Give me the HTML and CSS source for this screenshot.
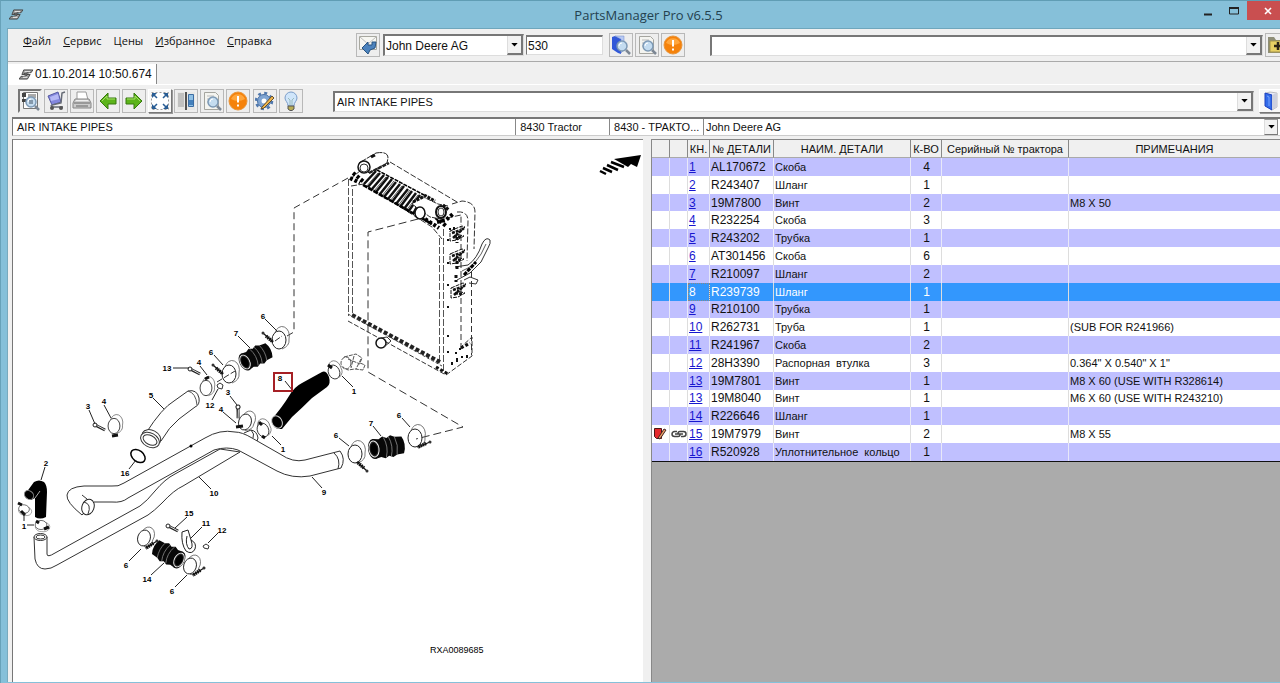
FILE: index.html
```html
<!DOCTYPE html>
<html lang="ru">
<head>
<meta charset="utf-8">
<title>PartsManager Pro v6.5.5</title>
<link rel="stylesheet" href="styles.css">
</head>
<body>
<svg class="defs" width="0" height="0" aria-hidden="true">
  <defs>
    <symbol id="logo" viewBox="0 0 16 12"><path d="M5 1h10l-2 3H9L8 6h4l-3 5H0l2-3h4l1-2H3z" fill="#999" stroke="#444"/><path d="M6 3h6M4 9h5" stroke="#fff"/><path d="M5 5l5-1M7 8l3-3" stroke="#444"/></symbol>
    <symbol id="arrow" viewBox="0 0 8 5"><path d="M0 0h8L4 4.500z"/></symbol>
    <symbol id="lens" viewBox="0 0 20 20"><circle cx="11" cy="11" r="5" fill="#c4dcf0" stroke="#7d99b5" stroke-width="1.500"/><path d="M8 11a3 3 0 0 1 3-3" stroke="#fff" fill="none"/><path d="M15 15l4 4" stroke="#7c8794" stroke-width="2.500"/></symbol>
    <symbol id="warn" viewBox="0 0 20 20"><circle cx="10" cy="10" r="9" fill="#f5820b" stroke="#e8963c"/><path d="M3 8a7.500 7.500 0 0 1 14 0q-7 4-14 0" fill="#ffa63d"/><path d="M10 5v6.500M10 13.500v2" stroke="#fff" stroke-width="2"/></symbol>
    <symbol id="pagefind" viewBox="0 0 20 20"><path d="M2.500 1.500h11l3 3v14h-14z" fill="#f4f4f0" stroke="#a5a59f"/><path d="M5 5h7M5 8h4M5 11h3" stroke="#bbb"/><use href="#lens"/></symbol>
    <symbol id="bookfind" viewBox="0 0 20 20"><path d="M1 2l3-1 6 3v15l-3-1-6-4z" fill="#3158d8"/><path d="M4 1h9v14l-3 3V4z" fill="#b8caf4" stroke="#6d86c8" stroke-width=".500"/><use href="#lens"/></symbol>
    <symbol id="left" viewBox="0 0 20 20"><path d="M2 10l8-8v5h8v6h-8v5z" fill="#5cb41a" stroke="#36780e" stroke-linejoin="round"/><path d="M4 10l5-5v3h8" fill="none" stroke="#a6df68"/></symbol>
  </defs>
</svg>
<div class="window">
  <header class="titlebar">
    <svg class="app-icon"><use href="#logo"/></svg>
    <h1>PartsManager Pro v6.5.5</h1>
    <div class="win-buttons">
      <button class="win" aria-label="Свернуть"><svg width="10" height="10"><path d="M1 8.500h8" stroke="#222" stroke-width="2"/></svg></button>
      <button class="win" aria-label="Развернуть"><svg width="10" height="10"><path d="M.5 2h9v6h-9z" fill="none" stroke="#222"/><path d="M0 2h10" stroke="#222" stroke-width="2"/></svg></button>
      <button class="win close" aria-label="Закрыть"><svg width="8" height="8"><path d="M1 1l6 6M7 1L1 7" stroke="#fff" stroke-width="1.600"/></svg></button>
    </div>
  </header>
  <div class="frame">
    <div class="menubar">
      <nav class="menu">
        <button><u>Ф</u>айл</button><button><u>С</u>ервис</button><button>Цены</button><button><u>И</u>збранное</button><button><u>С</u>правка</button>
      </nav>
      <button class="tool" aria-label="Назад к поиску"><svg viewBox="0 0 20 20"><path d="M1.500 1.500h17v13h-17z" fill="#f7f7f2" stroke="#a8a8a0"/><path d="M2 2l8 7 8-7" fill="none" stroke="#bbb"/><path d="M4 13l6-6v3h4V7h4l-1 6-5 2-2 4z" fill="#4d83bd" stroke="#285482"/></svg></button>
      <label class="combo brand"><select aria-label="Каталог"><option>John Deere AG</option></select><span class="drop"><svg><use href="#arrow"/></svg></span></label>
      <input class="query" type="text" value="530" aria-label="Поиск">
      <div class="tools find">
        <button class="tool" aria-label="Поиск в каталоге"><svg><use href="#bookfind"/></svg></button>
        <button class="tool" aria-label="Поиск детали"><svg><use href="#pagefind"/></svg></button>
        <button class="tool" aria-label="Внимание"><svg><use href="#warn"/></svg></button>
      </div>
      <label class="combo favourite"><select aria-label="Избранное"><option></option></select><span class="drop"><svg><use href="#arrow"/></svg></span></label>
      <button class="tool bleed" aria-label="Добавить в избранное"><svg viewBox="0 0 20 20"><path d="M1 2h6l2 3h11v13H1z" fill="#8e8e78"/><path d="M3 6h17v11H3z" fill="#e7d064" stroke="#a3934b"/><path d="M11 7v8M7 11h8" stroke="#2c2417" stroke-width="2.500"/></svg></button>
    </div>
    <div class="tabs"><button class="tab"><svg class="app-icon"><use href="#logo"/></svg>01.10.2014 10:50.674</button></div>
    <div class="toolbar">
      <div class="tools">
        <button class="tool pressed" aria-label="Список деталей"><svg viewBox="0 0 20 20"><path d="M3.500 1.500h14v16h-14z" fill="#fff" stroke="#777"/><path d="M2 2h4v4H2zM2 8h4v3H2z" fill="#444"/><path d="M8 4h8M8 6h8" stroke="#555"/><use href="#lens"/><path d="M9 10h4M9 12h4" stroke="#456"/></svg></button>
        <button class="tool" aria-label="Корзина"><svg viewBox="0 0 20 20"><path d="M2 5l10-4 3 10-9 3z" fill="#8387dd" stroke="#5559a2"/><path d="M4 6l8-3 1 5-8 2z" fill="#b5b8f5"/><path d="M19 1l-3 1-1 10-9 2M5 14l1 2h11" fill="none" stroke="#666b75" stroke-width="1.500"/><circle cx="6" cy="17" r="2" fill="#555"/><circle cx="15" cy="17" r="2" fill="#555"/></svg></button>
        <button class="tool" aria-label="Печать"><svg viewBox="0 0 20 20"><path d="M5 9V1h9l2 8" fill="#fff" stroke="#999"/><path d="M3 8h14l2 4v5H1v-5z" fill="#ccc" stroke="#858585"/><path d="M2 12h16M4 15h12" stroke="#666"/><path d="M4 9.500h12" stroke="#eee"/></svg></button>
        <button class="tool" aria-label="Предыдущая"><svg><use href="#left"/></svg></button>
        <button class="tool" aria-label="Следующая"><svg class="flip"><use href="#left"/></svg></button>
        <button class="tool raised" aria-label="Во весь экран"><svg viewBox="0 0 20 20"><path d="M1.500 1.500h17v17h-17z" fill="#fff" stroke="#999" stroke-dasharray="2 2"/><path d="M2 2h5L2 7zM18 2h-5l5 5zM2 18v-5l5 5zM18 18v-5l-5 5z" fill="#295d94"/><path d="M4 4l3 3M16 4l-3 3M4 16l3-3M16 16l-3-3" stroke="#295d94" stroke-width="1.500"/></svg></button>
        <button class="tool" aria-label="Разделить"><svg viewBox="0 0 20 20"><path d="M1 1h18v18H1z" fill="#e8e8e6"/><path d="M2 3h6M2 5h6M2 7h6M2 9h6M2 11h6M2 13h6M2 15h6" stroke="#999"/><path d="M10 1v18" stroke="#222" stroke-width="1.500"/><path d="M12.500 3.500h5v12h-5z" fill="#8fc0e5" stroke="#3c6da3"/><path d="M13 9h4v5h-4z" fill="#4581bc"/></svg></button>
        <button class="tool" aria-label="Просмотр"><svg><use href="#pagefind"/></svg></button>
        <button class="tool" aria-label="Внимание"><svg><use href="#warn"/></svg></button>
      </div>
      <div class="tools extra">
        <button class="tool" aria-label="Настройки"><svg viewBox="0 0 20 20"><circle cx="9" cy="10" r="6.500" fill="#7fa5d3" stroke="#466fa5" /><circle cx="9" cy="10" r="8" fill="none" stroke="#5078ad" stroke-width="2.500" stroke-dasharray="3 3.280"/><circle cx="9" cy="10" r="2.500" fill="#fff"/><path d="M7 16L17 5l2 2L9 17l-3 1z" fill="#f0b64c" stroke="#64502e"/></svg></button>
        <button class="tool" aria-label="Подсказка"><svg viewBox="0 0 20 20"><path d="M10 1a6 6 0 0 0-6 6c0 3 3 4 3 8h6c0-4 3-5 3-8a6 6 0 0 0-6-6z" fill="#cfe5fa" stroke="#7b9dca"/><path d="M9 14V9L7 7M11 14V9l2-2" fill="none" stroke="#9bb"/><path d="M7 15h6v3l-2 1.500H9L7 18z" fill="#b9ad55" stroke="#555"/></svg></button>
      </div>
      <label class="combo section"><select aria-label="Раздел"><option>AIR INTAKE PIPES</option></select><span class="drop"><svg><use href="#arrow"/></svg></span></label>
      <button class="tool raised book" aria-label="Каталог"><svg viewBox="0 0 20 20"><path d="M5 2l4-1 7 1v14l-5 3-6-4z" fill="#e5e8f5" stroke="#888" stroke-width=".500"/><path d="M4 2l7 2v15l-7-4z" fill="#326bea" stroke="#1c41bd"/><path d="M11 4l5-2v14l-5 3" fill="#cdd0dd"/><path d="M6 5l2 1v9" stroke="#78a5fa" fill="none"/></svg></button>
    </div>
    <div class="path">
      <span>AIR INTAKE PIPES</span><span>8430 Tractor</span><span>8430 - ТРАКТО...</span>
      <label class="combo catalog"><select aria-label="Производитель"><option>John Deere AG</option></select><span class="drop"><svg><use href="#arrow"/></svg></span></label>
    </div>
    <main class="content">
      <section class="drawing" aria-label="AIR INTAKE PIPES">
        <svg class="scheme" viewBox="13 141 630 541" preserveAspectRatio="xMinYMin meet" role="img" aria-label="RXA0089685">
          <defs>
            <g id="clamp"><ellipse rx="7" ry="9" fill="none" stroke="#222"/><path d="M-4-7A7 9 0 0 1 10-1Q11 6 3 9" fill="none" stroke="#555" stroke-width=".800"/></g>
            <g id="screw"><path d="M0 0l10 9" stroke="#111" stroke-width="1.200"/><path d="M3 3l7 6" stroke="#111" stroke-width="3.500" stroke-dasharray="1.500 .700"/><circle r="1.500" fill="#333"/></g>
            <g id="bolt"><path d="M0 0l10 5" stroke="#222" stroke-width="3"/><path d="M1 0l9 5" stroke="#ddd"/><circle r="2" fill="#fff" stroke="#222"/></g>
            <g id="bellows"><path d="M0-10L6-9 10-11 14-9 18-11 22-9 29-8Q33 0 29 9L22 9 18 11 14 9 10 11 6 9 0 10z" fill="#080808"/><path d="M11-10Q15 0 11 10M16-10Q20 0 16 10M22-9Q25 0 22 9" fill="none" stroke="#888" stroke-width=".800"/><ellipse rx="6" ry="10" fill="#111"/><ellipse rx="5" ry="8" fill="#222" stroke="#eee"/><ellipse rx="3.500" ry="6" fill="#000"/></g>
            <g id="bracket"><path d="M-7-3L5-8 8-7 3-2-1 0 7 2 0 6-7 7z" fill="none" stroke="#111" stroke-dasharray="4 1"/><path d="M-4 4L7-6M-5-1L4-4M-3 2l7 1" stroke="#111" stroke-width="2.500" stroke-dasharray="3 1"/></g>
          </defs>

          <!-- direction arrow -->
          <path d="M614 160L641 156 637 168 631 165 628 168z"/>
          <path d="M611 163l13 5M607 166l11 5M603 169l9 4M600 172l6 3" stroke="#000" stroke-width="2.500"/>

          <!-- radiator -->
          <g fill="none" stroke="#333">
            <path d="M348 179L294 209V333L287 337" stroke-dasharray="7 4"/>
            <path d="M418 220L368 233V373L463 428 416 440" stroke-dasharray="8 4"/>
            <path d="M348.500 180V317M352.500 190V314M439.500 239V365M443.500 230V372" stroke="#555" stroke-dasharray="7 2"/>
            <path d="M461 227V350M471.500 273V356" stroke-dasharray="6 3"/>
            <path d="M348 322L446 376 472 357V338L461 348" stroke-dasharray="5 2"/>
            <path d="M350 180L360 172M351 187L364 185 432 228 442 240M390 163L457 203" stroke-dasharray="6 2"/>
            <path d="M452 205L462 202Q475 203 475 213L474 250M457 213Q468 212 468 222L467 262M447 219L461 216V226" stroke-dasharray="6 2"/>
            <path d="M455 268L468 266Q477 260 482 245 486 237 490 241 491 244 488 249L481 263 470 274 457 281" />
            <path d="M462 272Q477 267 486 245" stroke-width=".800"/>
            <path d="M464 276l12-13" stroke="#000" stroke-width="3" stroke-dasharray="4 1"/>
            <path d="M464 281l6-3 8 3-2 4-7-1" />
            <path d="M376 172L364 185M380 174L368 188M384 176L372 190M388 178L376 193M392 180L380 195M396 183L384 198M400 185L388 200M404 187L392 203M408 190L396 205M412 192L400 208M416 194L404 210M420 196L408 213M420 202L413 215" stroke="#111" stroke-width="2.500"/>
            <path d="M378 174L366 188M386 178L374 192M394 182L382 197M402 187L390 202M410 191L398 207M418 196L406 212" stroke="#555" stroke-width="1"/>
            <path d="M363 186L432 225" stroke="#000" stroke-width="2.500" stroke-dasharray="5 1"/>
            <path d="M377 171L424 196" stroke="#000" stroke-width="1.500" stroke-dasharray="4 1"/>
            <path d="M350 179L360 184M353 174l11 9M432 215l14 12M437 223l9-2 8-7M425 220l14 9" stroke="#000" stroke-width="4" stroke-dasharray="3 2"/>
            <path d="M352 316L440 363" stroke="#222" stroke-width="4" stroke-dasharray="4 2"/>
            <path d="M348 315L442 367" stroke="#444" stroke-dasharray="3 2"/>
            <path d="M436 368l12 7M461 349l9-5M457 238v6M457 262v9M456 276v7" stroke="#111" stroke-width="3" stroke-dasharray="3 2"/>
            <path d="M359 164L376 154Q388 152 388 159L387 164 369 174z" fill="#fff" stroke="#222" stroke-dasharray="8 1"/>
            <path d="M369 174l20-10" stroke="#222" stroke-width="2.500" stroke-dasharray="4 1"/>
            <ellipse cx="364" cy="168" rx="6" ry="6" fill="#fff" stroke="#111" stroke-width="1.500"/><ellipse cx="364" cy="169" rx="4" ry="4"/>
            <path d="M371 158l4-2" stroke="#111" stroke-width="3"/>
            <path d="M412 205L421 197 438 205 448 207 441 220 430 218z" fill="#fff" stroke-dasharray="5 1"/>
            <path d="M413 203l10-5M424 196l11 6M443 206l6 5" stroke="#111" stroke-width="3" stroke-dasharray="3 1"/>
            <ellipse cx="420" cy="214" rx="5" ry="6" fill="#fff" stroke="#111" stroke-width="1.500"/>
            <ellipse cx="441" cy="213" rx="5" ry="6" fill="#fff" stroke="#111" stroke-width="2"/><ellipse cx="441" cy="213" rx="3" ry="4"/>
            <circle cx="381" cy="344" r="5" fill="#fff" stroke="#111" stroke-width="1.500"/><path d="M381 339l6-1 4 4-7 6"/>
          </g>
          <use href="#bracket" x="457" y="235"/><use href="#bracket" x="457" y="258"/><use href="#bracket" x="458" y="292"/>
          <path d="M448 240v2M448 263v2M448 285v2M448 307v2M448 336v2M448 352v2M452 363v3M457 359v4M456 353v2M462 357v2M467 356v3M460 349v2M454 228v3M450 229v2" stroke="#111" stroke-width="2"/>

          <!-- pipe 10 -->
          <g fill="#fff" stroke="#333">
            <path d="M34 538L35 560Q37 570 45 570 51 570 57 566L148 516Q154 512 162 504 174 491 183 487L240 453 220 450 175 475Q165 480 155 492 147 502 140 507L55 554Q47 559 47 555V538z"/>
            <ellipse cx="40.500" cy="538" rx="6.500" ry="3.500"/><ellipse cx="40.500" cy="538" rx="4.500" ry="2"/>
          </g>
          <!-- pipe 9 -->
          <path d="M82 516Q66 503 67 496 68 488 84 487H112Q118 488 124 484L205 439Q220 430 235 433 242 433 252 439L280 455Q293 464 305 461L340 452Q346 460 341 469L310 477Q292 480 277 472L238 451Q227 447 214 451L128 499Q122 504 112 503H94z" fill="#fff" stroke="#333"/>
          <path d="M82 496l5 4M334 454Q341 460 338 470" fill="none" stroke="#333"/><circle cx="191" cy="447" r="1.500"/>
          <ellipse cx="88" cy="508" rx="6" ry="8" transform="rotate(20 88 508)" fill="#fff" stroke="#222"/>
          <path d="M84 503Q92 505 88 515M244 434L251 431Q257 432 258 439L257 442M251 431Q255 435 253 439" fill="none" stroke="#333"/>

          <!-- pipe 5 -->
          <path d="M146 434Q162 409 174 402L188 392Q197 390 199 399 200 406 195 408L179 420Q169 428 161 442z" fill="#fff" stroke="#333"/>
          <path d="M188 392q8 2 9 14" fill="none" stroke="#555"/>
          <g transform="rotate(28 150 441)" fill="#fff" stroke="#333"><ellipse cx="150" cy="438" rx="10" ry="7"/><ellipse cx="150" cy="441" rx="10" ry="7"/><ellipse cx="150" cy="441" rx="7.500" ry="4.500"/></g>
          <ellipse cx="138" cy="457" rx="8" ry="5.500" transform="rotate(38 138 457)" fill="none" stroke="#000" stroke-width="1.500"/>

          <!-- hose 8 and hose 2 -->
          <path d="M272 420Q283 407 289 397 294 388 302 384L322 373Q326 371 329 378 331 385 327 388L312 399Q302 409 292 418L282 430Q272 431 272 420z"/>
          <ellipse cx="277" cy="423" rx="5" ry="6.500" transform="rotate(-30 277 423)" stroke="#ccc"/>
          <path d="M26 494L34 483Q39 480 44 483 47 486 47 493L46 518Q40 521 35 518V499L31 501z"/>
          <ellipse cx="29" cy="496" rx="4" ry="5" transform="rotate(-50 29 496)" stroke="#888"/>
          <path d="M40 492l-5 7" stroke="#aaa"/>

          <use href="#bellows" transform="translate(245 363) rotate(-27) scale(.92)"/>
          <use href="#bellows" transform="translate(374 450) rotate(-9)"/>
          <use href="#bellows" transform="translate(179 561) rotate(208) scale(.92)"/>

          <!-- clamps -->
          <use href="#clamp" transform="translate(279 341)"/><use href="#screw" x="263" y="334"/>
          <use href="#clamp" transform="translate(229 375)"/><use href="#screw" x="213" y="366"/>
          <use href="#clamp" transform="translate(206 389) scale(.85)"/>
          <use href="#clamp" transform="translate(114 427) scale(.85)"/>
          <use href="#clamp" transform="translate(245 423) rotate(18) scale(.9)"/>
          <use href="#clamp" transform="translate(263 431) rotate(-25) scale(.8)"/>
          <use href="#clamp" transform="translate(334 373) rotate(-25) scale(.8)"/>
          <use href="#clamp" transform="translate(355 455)"/><use href="#screw" transform="translate(367 472) rotate(180)"/>
          <use href="#clamp" transform="translate(415 439)"/><use href="#screw" transform="translate(430 443) rotate(115)"/>
          <use href="#clamp" transform="translate(24 510) rotate(100) scale(.6)"/>
          <use href="#clamp" transform="translate(41 526) rotate(90) scale(.65)"/>
          <use href="#clamp" transform="translate(144 539) rotate(18) scale(.9)"/><use href="#screw" transform="translate(157 542) rotate(105)"/>
          <use href="#clamp" transform="translate(190 567) rotate(18) scale(.9)"/><use href="#screw" transform="translate(204 569) rotate(105)"/>
          <path d="M205 380l4-2M112 437l6-1M236 428l7-1M259 423l3 3M328 366l4 3M18 504l4 2M36 522l3 2M44 530l5-2M186 536l-3-3M21 512l4 4M262 437l3 2" stroke="#111" stroke-width="3"/>
          <path d="M182 533L188 531 191 541Q197 544 195 550 192 556 186 552 181 545 182 533zM187 537q-2 8 2 13 5 0 2-9" fill="#fff" stroke="#222"/>
          <use href="#bolt" x="190" y="370"/><use href="#bolt" x="95" y="426"/><use href="#bolt" x="168" y="527"/><use href="#bolt" transform="translate(238 408) rotate(63)"/>
          <path d="M217 386l3-2 3 2-1 4-4-1zM203 547l3-2 3 2-1 3-4-1z" fill="#fff" stroke="#333"/>
          <path d="M217 383l18-11M275 342l7-5" stroke="#333" stroke-dasharray="6 2"/>
          <g fill="none" stroke="#555" stroke-dasharray="4 1"><ellipse cx="346" cy="364" rx="5" ry="6"/><path d="M344 358l12-3 6 4-2 5 5 2-2 5-8-1-7 1-5-3M354 357l-3 12M361 360l-5 10M348 360l12 5"/></g>

          <!-- leader lines -->
          <path d="M238 337l12 12M265 320l12 12M214 356l9 10M200 367l7 9M173 369h16M153 399l11 11M104 406l7 13M89 411l6 14M212 401l6-11M230 397l7 9M223 413l13 11M129 470l7-9M45 468l-4 13M199 478l12 12M285 382l8 10M342 377l11 11M272 437l9 9M339 439l10 8M373 427l8 10M402 419l8 9M312 478l10 11M187 518l-12 11M202 528l-11 11M218 534l-10 10M129 562l12-12M151 576l13-12M175 588l12-12M24 514v8M27 526h7" stroke="#222" fill="none"/>
          <rect x="274" y="374" width="18" height="18" fill="none" stroke="#a62025" stroke-width="2"/>
          <g class="callouts">
            <text x="236" y="337">7</text><text x="263" y="320">6</text><text x="211" y="356">6</text><text x="199" y="366">4</text><text x="167" y="372">13</text><text x="151" y="399">5</text><text x="88" y="410">3</text><text x="104" y="405">4</text><text x="210" y="409">12</text><text x="228" y="396">3</text><text x="221" y="413">4</text><text x="125" y="477">16</text><text x="46" y="467">2</text><text x="214" y="497">10</text><text x="280" y="382">8</text><text x="354" y="395">1</text><text x="283" y="453">1</text><text x="336" y="439">6</text><text x="371" y="427">7</text><text x="399" y="419">6</text><text x="324" y="496">9</text><text x="189" y="517">15</text><text x="206" y="527">11</text><text x="222" y="534">12</text><text x="126" y="569">6</text><text x="147" y="583">14</text><text x="172" y="595">6</text><text x="24" y="530">1</text>
          </g>
          <text class="plate" x="430" y="654">RXA0089685</text>
        </svg>
      </section>
      <section class="parts">
        <table>
          <colgroup><col class="c-mark"><col class="c-mark"><col class="c-key"><col class="c-no"><col class="c-name"><col class="c-qty"><col class="c-serial"><col></colgroup>
          <thead><tr><th></th><th></th><th>КН.</th><th>№ ДЕТАЛИ</th><th>НАИМ. ДЕТАЛИ</th><th>К-ВО</th><th>Серийный № трактора</th><th>ПРИМЕЧАНИЯ</th></tr></thead>
          <tbody>
            <tr><td></td><td></td><td><a href="#1">1</a></td><td>AL170672</td><td>Скоба</td><td>4</td><td></td><td></td></tr>
            <tr><td></td><td></td><td><a href="#2">2</a></td><td>R243407</td><td>Шланг</td><td>1</td><td></td><td></td></tr>
            <tr><td></td><td></td><td><a href="#3">3</a></td><td>19M7800</td><td>Винт</td><td>2</td><td></td><td>M8 X 50</td></tr>
            <tr><td></td><td></td><td><a href="#4">4</a></td><td>R232254</td><td>Скоба</td><td>3</td><td></td><td></td></tr>
            <tr><td></td><td></td><td><a href="#5">5</a></td><td>R243202</td><td>Трубка</td><td>1</td><td></td><td></td></tr>
            <tr><td></td><td></td><td><a href="#6">6</a></td><td>AT301456</td><td>Скоба</td><td>6</td><td></td><td></td></tr>
            <tr><td></td><td></td><td><a href="#7">7</a></td><td>R210097</td><td>Шланг</td><td>2</td><td></td><td></td></tr>
            <tr class="selected"><td></td><td></td><td><a href="#8">8</a></td><td>R239739</td><td>Шланг</td><td>1</td><td></td><td></td></tr>
            <tr><td></td><td></td><td><a href="#9">9</a></td><td>R210100</td><td>Трубка</td><td>1</td><td></td><td></td></tr>
            <tr><td></td><td></td><td><a href="#10">10</a></td><td>R262731</td><td>Труба</td><td>1</td><td></td><td>(SUB FOR R241966)</td></tr>
            <tr><td></td><td></td><td><a href="#11">11</a></td><td>R241967</td><td>Скоба</td><td>2</td><td></td><td></td></tr>
            <tr><td></td><td></td><td><a href="#12">12</a></td><td>28H3390</td><td>Распорная  втулка</td><td>3</td><td></td><td>0.364" X 0.540" X 1"</td></tr>
            <tr><td></td><td></td><td><a href="#13">13</a></td><td>19M7801</td><td>Винт</td><td>1</td><td></td><td>M8 X 60 (USE WITH R328614)</td></tr>
            <tr><td></td><td></td><td><a href="#13">13</a></td><td>19M8040</td><td>Винт</td><td>1</td><td></td><td>M6 X 60 (USE WITH R243210)</td></tr>
            <tr><td></td><td></td><td><a href="#14">14</a></td><td>R226646</td><td>Шланг</td><td>1</td><td></td><td></td></tr>
            <tr><td><svg width="14" height="12"><path d="M1.500 .500h7v10h-5l-2-2z" fill="#e5282b" stroke="#4a1616"/><path d="M5 10l6-9 2 1-6 9z" fill="#e7a064" stroke="#422"/></svg></td><td><svg width="16" height="12"><path d="M6 3.500H3.500a2.500 2.500 0 0 0 0 5H7q2 0 2-2M10 8.500h2.500a2.500 2.500 0 0 0 0-5H9q-2 0-2 2M4 6h8" fill="none" stroke="#444" stroke-width="1.500"/></svg></td><td><a href="#15">15</a></td><td>19M7979</td><td>Винт</td><td>2</td><td></td><td>M8 X 55</td></tr>
            <tr><td></td><td></td><td><a href="#16">16</a></td><td>R520928</td><td>Уплотнительное  кольцо</td><td>1</td><td></td><td></td></tr>
          </tbody>
        </table>
      </section>
    </main>
  </div>
</div>
</body>
</html>
```

FILE: styles.css
```css
* { box-sizing: border-box; }
body { margin: 0; font: 11px/14px "Liberation Sans", Arial, sans-serif; color: #111; background: #86c0d9; }
button, input, select { font: inherit; color: inherit; margin: 0; border-radius: 0; }
button { padding: 0; border: 0; background: none; }
.defs { position: absolute; }

.window { min-height: 100vh; display: flex; flex-direction: column; overflow: hidden; border-top: 1px solid #609db4; border-left: 1px solid #68a2b9; padding: 0 0 1px 6px; }
.titlebar { display: grid; grid-template-columns: 160px 1fr 150px; height: 27px; }
.titlebar h1 { margin: 0; padding-top: 4px; text-align: center; font: 13px/20px "Open Sans", "Noto Sans", sans-serif; color: #24414f; }
.app-icon { width: 15px; height: 11px; }
.titlebar .app-icon { margin: 8px 0 0 2px; }
.win-buttons { display: flex; justify-content: flex-end; margin-right: -8px; }
.win { width: 26px; height: 19px; display: grid; place-items: center; }
.win.close { width: 41px; background: #c94f50; }

.frame { flex: 1; display: flex; flex-direction: column; background: #f0f0f0; border-top: 1px solid #6fa6bc; border-left: 1px solid #79aabd; }
.menubar { display: flex; align-items: center; height: 33px; border-bottom: 1px solid #aaa; }
.menu { display: flex; gap: 12px; padding: 0 0 8px 15px; flex: 0 0 348px; font: 11px/14px "Open Sans", "Noto Sans", sans-serif; }
.tools { display: flex; gap: 2px; }
.tool { flex: none; width: 24px; height: 24px; display: grid; place-items: center; border: 1px solid #b8b8b8; background: #eee; }
.tool svg { width: 20px; height: 20px; }
.tool.pressed { border: 2px solid; border-color: #777 #eee #eee #777; }
.tool.raised { border: 1px solid; border-color: #fff #777 #777 #fff; box-shadow: 1px 1px #999; background: #f8f8f8; }
.tool.bleed { margin-right: -9px; }
.flip { transform: scaleX(-1); }

.combo { display: grid; grid-template-columns: 1fr 16px; min-width: 0; height: 21px; background: #fff; border: 1px solid #ddd; border-top: 2px solid #777; border-left: 2px solid #777; }
.combo select { grid-area: 1 / 1 / 2 / 3; min-width: 0; appearance: none; border: 0; background: transparent; padding: 0 18px 0 2px; outline: 0; }
.drop { grid-area: 1 / 2; display: grid; place-items: center; pointer-events: none; background: #f2f2f2; border-right: 2px solid #777; border-bottom: 2px solid #777; border-left: 1px solid #ddd; }
.drop svg { width: 7px; height: 4px; }
.brand { flex: 0 0 141px; margin: 0 2px 0 3px; height: 22px; font-size: 12px; }
.brand select { padding-left: 1px; }
.query { width: 77px; height: 20px; border: 1px solid #ddd; border-top: 2px solid #777; border-left: 1px solid #777; padding: 0 1px; font-size: 12px; }
.find { margin: 0 25px 0 6px; }
.favourite { flex: 1; margin-right: 2px; }

.tabs { height: 23px; display: flex; align-items: flex-end; border-bottom: 1px solid #fff; }
.tab { display: flex; align-items: center; gap: 1px; height: 20px; padding: 0 4px 0 11px; background: #fff; border-right: 1px solid #888; font-size: 12px; line-height: 18px; white-space: nowrap; }
.toolbar { display: flex; align-items: center; height: 32px; padding-left: 10px; }
.extra { margin: 0 30px 0 3px; }
.section { flex: 1; }
.book { margin: 0 -3px 0 5px; }
.path { display: grid; grid-template-columns: 504fr 94fr 94fr 577fr; height: 19px; margin: 0 0 3px 4px; background: #fff; border-top: 2px solid #777; border-left: 1px solid #777; border-bottom: 1px solid #ccc; }
.path span { padding: 1px 4px; overflow: hidden; white-space: nowrap; border-right: 1px solid #888; }
.path .combo { height: 16px; border: 0; }
.path .combo .drop { margin-right: 2px; padding: 0; border-right-width: 1px; border-bottom-width: 1px; border-top: 1px solid #999; }

.content { flex: 1; display: grid; grid-template-columns: 631fr 629fr; gap: 8px; margin-left: 4px; }
.drawing { background: #fff; border-top: 1px solid #888; border-left: 1px solid #777; }
.scheme { display: block; width: 100%; }
.callouts text { font: bold 8px "Liberation Sans", Arial, sans-serif; text-anchor: middle; }
.plate { font: 9px "Liberation Sans", Arial, sans-serif; }
.parts { background: #ababab; overflow: hidden; border-left: 1px solid #888; border-top: 1px solid #888; }
table { width: 100%; height: 322px; table-layout: fixed; border-collapse: separate; border-spacing: 0; border-bottom: 1px solid #111; }
.c-mark { width: 18px; }
.c-key { width: 22px; }
.c-no { width: 64px; }
.c-name { width: 137px; }
.c-qty { width: 31px; }
.c-serial { width: 127px; }
th { padding: 0; height: 18px; font-weight: normal; line-height: 14px; background: #f0f0f0; border-right: 1px solid #888; border-bottom: 1px solid #aaa; white-space: nowrap; }
td { padding: 0 0 0 1px; line-height: 14px; white-space: pre; background: #fff; border-right: 1px solid #ddd; }
tbody tr:nth-child(odd) td { background: #c0c0ff; border-right-color: #e8e8f8; }
th:last-child, td:last-child { border-right: 0; }
td:nth-child(3), td:nth-child(4) { font-size: 12px; }
td:nth-child(6) { text-align: center; font-size: 12px; }
td svg { display: block; }
td a { color: #1717cf; }
tbody tr.selected td { background: #3397fd; color: #fff; }
.selected a { color: #fff; text-decoration: none; }
.selected td:nth-child(3) { outline: 1px dotted #888; outline-offset: -1px; }
```
